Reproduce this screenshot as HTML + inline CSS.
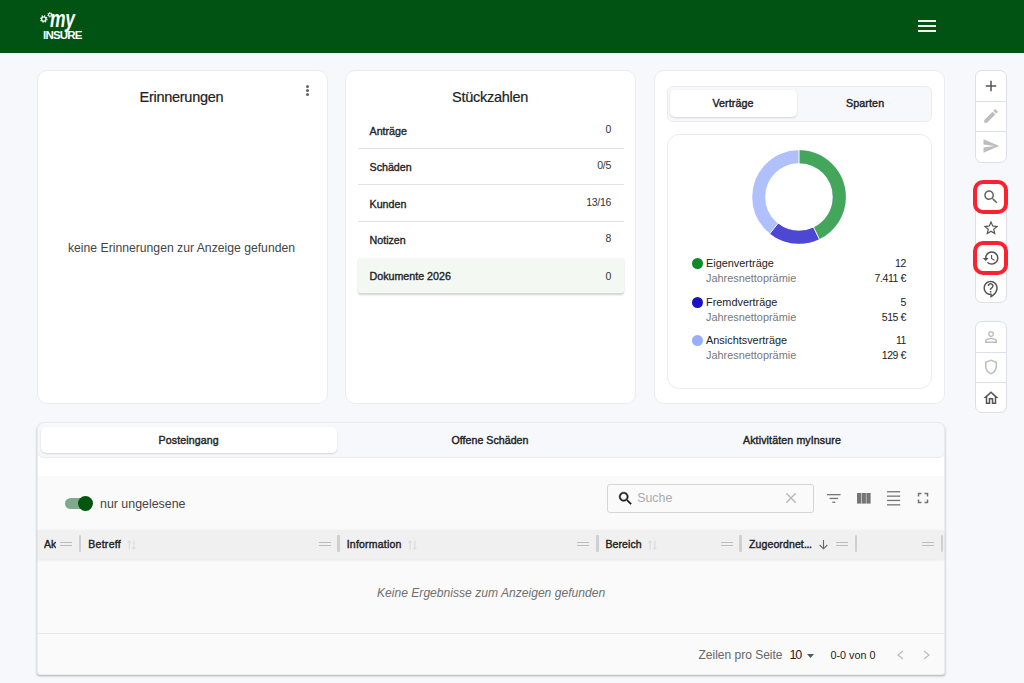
<!DOCTYPE html>
<html lang="de">
<head>
<meta charset="utf-8">
<title>myInsure</title>
<style>
*{box-sizing:border-box;margin:0;padding:0}
html,body{width:1024px;height:683px;overflow:hidden}
body{background:#f7f8fc;font-family:"Liberation Sans",sans-serif;color:#222;position:relative}
.abs{position:absolute}
.hdr{position:absolute;left:0;top:0;width:1024px;height:52.6px;background:#005312;box-shadow:0 1.4px 0 rgba(255,255,255,.85)}
.card{position:absolute;background:#fff;border:1px solid #ececee;border-radius:10px}
.t{position:absolute;white-space:nowrap;line-height:1}
.row{position:absolute;left:358px;width:266px;height:36px;border-bottom:1px solid #e2e2e2}
.lbl{font-size:10.7px;color:#222;-webkit-text-stroke:0.35px #222;letter-spacing:0}
.val{font-size:10.5px;color:#333;text-align:right;letter-spacing:-0.3px}
.lg{font-size:10.9px;color:#222}
.lg2{font-size:10.9px;color:#777}
.lv{font-size:10.5px;color:#222;letter-spacing:-0.4px}
.sb{position:absolute;left:975px;width:32px;background:#fff;border:1px solid #dcdfe9;border-radius:7px}
.sb i{position:absolute;left:0;width:30px;height:1px;background:#dcdfe9}
.red{position:absolute;left:973px;width:35px;height:34px;border:4.5px solid #f9222e;border-radius:10px}
svg{position:absolute;overflow:visible}
.ic{width:18px;height:18px}
.hd{font-size:10.5px;color:#222;-webkit-text-stroke:0.4px #222;letter-spacing:0.12px;top:539px}
.sep{position:absolute;top:535px;width:2.5px;height:17px;background:#d0d0d0;border-radius:1px}
.hdl{position:absolute;top:542px;width:12px;height:4px;border-top:1px solid #bdbdbd;border-bottom:1px solid #bdbdbd}
.srt{top:539.5px;width:9px;height:10px;fill:none;stroke:#d6d6d6;stroke-width:0.9}
.tab{font-size:10.6px;color:#222;-webkit-text-stroke:0.4px #222}
</style>
</head>
<body>
<div class="hdr">
  <div class="t" style="left:43px;top:30px;font-size:11.5px;font-weight:bold;color:#fff;letter-spacing:-0.8px">INSURE</div>
  <div class="t" id="t_my" style="left:50px;top:6px;font-size:23px;font-style:italic;font-weight:bold;color:#fff;transform-origin:0 0;transform:scale(0.76,1.08);letter-spacing:-0.5px">my</div>
  <svg style="left:40px;top:11px" width="14" height="12" viewBox="0 0 14 12"><circle cx="3.8" cy="8" r="2.2" fill="none" stroke="#fff" stroke-width="1.3"/><circle cx="3.8" cy="8" r="3.2" fill="none" stroke="#fff" stroke-width="1.2" stroke-dasharray="1.2 1.3"/><circle cx="10" cy="3.8" r="1.5" fill="none" stroke="#fff" stroke-width="1.1"/><circle cx="10" cy="3.8" r="2.3" fill="none" stroke="#fff" stroke-width="0.9" stroke-dasharray="0.9 0.9"/></svg>
  <div class="abs" style="left:918px;top:20px;width:18px;height:2px;background:#f0f0f0"></div>
  <div class="abs" style="left:918px;top:25px;width:18px;height:2px;background:#f0f0f0"></div>
  <div class="abs" style="left:918px;top:30px;width:18px;height:2px;background:#f0f0f0"></div>
</div>

<!-- card 1 -->
<div class="card" style="left:37px;top:70px;width:291px;height:334px"></div>
<div class="t" id="t_erin" style="left:139.5px;top:90px;font-size:14.5px;color:#222;letter-spacing:-0.27px;-webkit-text-stroke:0.2px #222">Erinnerungen</div>
<div class="abs" style="left:306px;top:85px;width:3px;height:3px;border-radius:50%;background:#666;box-shadow:0 4px 0 #666,0 8px 0 #666"></div>
<div class="t" id="t_keine" style="left:68px;top:241.8px;font-size:12.2px;color:#444">keine Erinnerungen zur Anzeige gefunden</div>

<!-- card 2 -->
<div class="card" style="left:345px;top:70px;width:291px;height:334px"></div>
<div class="t" id="t_stk" style="left:452px;top:90px;font-size:14.5px;color:#222;letter-spacing:-0.27px;-webkit-text-stroke:0.2px #222">Stückzahlen</div>
<div class="row" style="top:112px;height:37px"></div>
<div class="row" style="top:149px;height:36px"></div>
<div class="row" style="top:185px;height:37px"></div>
<div class="row" style="top:221px;border-bottom:none"></div>
<div class="row" style="top:257.6px;height:36.2px;background:#f3f8f3;border-bottom:1px solid #d8d8d8;border-radius:3px;box-shadow:0 1px 2px rgba(0,0,0,.18)"></div>
<div class="t lbl" style="left:369.5px;top:126px">Anträge</div>
<div class="t lbl" style="left:369.5px;top:162px">Schäden</div>
<div class="t lbl" style="left:369.5px;top:199px">Kunden</div>
<div class="t lbl" style="left:369.5px;top:235px">Notizen</div>
<div class="t lbl" style="left:369.5px;top:271px">Dokumente 2026</div>
<div class="t val" style="right:413px;top:124px">0</div>
<div class="t val" style="right:413px;top:160px">0/5</div>
<div class="t val" style="right:413px;top:197px">13/16</div>
<div class="t val" style="right:413px;top:233px">8</div>
<div class="t val" style="right:413px;top:271px">0</div>

<!-- card 3 -->
<div class="card" style="left:654px;top:70px;width:291px;height:334px"></div>
<div class="abs" style="left:667px;top:86px;width:265px;height:36px;background:#f7f8fb;border:1px solid #ececf0;border-radius:6px"></div>
<div class="abs" style="left:670px;top:90px;width:127px;height:27px;background:#fff;border-radius:5px;box-shadow:0 1px 2px rgba(0,0,0,.15)"></div>
<div class="t" id="t_vert" style="left:712.5px;top:98px;font-size:10.7px;-webkit-text-stroke:0.4px #222;color:#222;letter-spacing:0.07px">Verträge</div>
<div class="t" id="t_spar" style="left:846px;top:98px;font-size:10.7px;-webkit-text-stroke:0.4px #222;color:#222;letter-spacing:0.11px">Sparten</div>
<div class="abs" style="left:667px;top:134px;width:265px;height:255px;background:#fff;border:1px solid #ececee;border-radius:12px"></div>
<svg style="left:751px;top:149px" width="96" height="96" viewBox="-48 -48 96 96">
  <g fill="none" stroke-width="13" transform="rotate(-90)">
    <circle r="40.3" stroke="#b0c0fc" />
    <circle r="40.3" stroke="#43a65b" stroke-dasharray="108.5 400" />
    <circle r="40.3" stroke="#4e47d3" stroke-dasharray="45.2 400" stroke-dashoffset="-108.5"/>
  </g>
  <g stroke="#fff" stroke-width="1">
    <line x1="0" y1="-33" x2="0" y2="-47.5"/>
    <line x1="14.3" y1="29.7" x2="20.6" y2="42.8"/>
    <line x1="-20.6" y1="25.8" x2="-29.6" y2="37.1"/>
  </g>
</svg>
<!-- legend -->
<div class="abs" style="left:692px;top:258px;width:11px;height:11px;border-radius:50%;background:#0b8a27"></div>
<div class="abs" style="left:692px;top:297px;width:11px;height:11px;border-radius:50%;background:#1a12c4"></div>
<div class="abs" style="left:692px;top:335px;width:11px;height:11px;border-radius:50%;background:#98adfb"></div>
<div class="t lg" style="left:706px;top:258px">Eigenverträge</div>
<div class="t lg2" style="left:706px;top:273px">Jahresnettoprämie</div>
<div class="t lg" style="left:706px;top:297px">Fremdverträge</div>
<div class="t lg2" style="left:706px;top:312px">Jahresnettoprämie</div>
<div class="t lg" style="left:706px;top:335px">Ansichtsverträge</div>
<div class="t lg2" style="left:706px;top:350px">Jahresnettoprämie</div>
<div class="t lv" style="right:118px;top:258px">12</div>
<div class="t lv" style="right:118px;top:273px">7.411 €</div>
<div class="t lv" style="right:118px;top:297px">5</div>
<div class="t lv" style="right:118px;top:312px">515 €</div>
<div class="t lv" style="right:118px;top:335px">11</div>
<div class="t lv" style="right:118px;top:350px">129 €</div>

<!-- sidebar -->
<div class="sb" style="top:70px;height:93px"><i style="top:30px"></i><i style="top:60px"></i></div>
<div class="sb" style="top:182px;height:121px"></div>
<div class="sb" style="top:321px;height:92px"><i style="top:30px"></i><i style="top:60px"></i></div>
<div class="red" style="top:180px"></div>
<div class="red" style="top:241px"></div>
<svg class="ic" style="left:982px;top:76.7px" viewBox="0 0 24 24" fill="#555"><path d="M19 13h-6v6h-2v-6H5v-2h6V5h2v6h6v2z"/></svg>
<svg class="ic" style="left:982px;top:107px" viewBox="0 0 24 24" fill="#bdbdbd"><path d="M3 17.25V21h3.750L17.810 9.940l-3.750-3.750L3 17.250zM20.710 7.040c.390-.390.390-1.020 0-1.410l-2.340-2.340c-.390-.390-1.020-.390-1.410 0l-1.830 1.830 3.750 3.750 1.830-1.830z"/></svg>
<svg class="ic" style="left:982px;top:137.2px" viewBox="0 0 24 24" fill="#bdbdbd"><path d="M2.010 21L23 12 2.010 3 2 10l15 2-15 2z"/></svg>
<svg class="ic" style="left:982px;top:188px" viewBox="0 0 24 24" fill="#666"><path d="M15.500 14h-.790l-.280-.270C15.410 12.590 16 11.110 16 9.500 16 5.910 13.090 3 9.500 3S3 5.910 3 9.500 5.910 16 9.500 16c1.610 0 3.090-.590 4.230-1.570l.270.280v.790l5 4.990L20.490 19l-4.990-5zm-6 0C7.010 14 5 11.990 5 9.500S7.010 5 9.500 5 14 7.010 14 9.500 11.990 14 9.500 14z"/></svg>
<svg class="ic" style="left:982px;top:218.500px" viewBox="0 0 24 24" fill="#555"><path d="M22 9.240l-7.190-.620L12 2 9.190 8.630 2 9.240l5.460 4.730L5.820 21 12 17.270 18.180 21l-1.630-7.030L22 9.240zM12 15.400l-3.760 2.270 1-4.280-3.320-2.880 4.380-.380L12 6.100l1.710 4.040 4.380.380-3.320 2.880 1 4.280L12 15.400z"/></svg>
<svg class="ic" style="left:982px;top:249px" viewBox="0 0 24 24" fill="#555"><path d="M13 3c-4.970 0-9 4.030-9 9H1l3.890 3.890.070.140L9 12H6c0-3.870 3.130-7 7-7s7 3.130 7 7-3.130 7-7 7c-1.930 0-3.680-.790-4.940-2.060l-1.420 1.420C8.270 19.990 10.510 21 13 21c4.970 0 9-4.030 9-9s-4.030-9-9-9zm-1 5v5l4.280 2.540.720-1.210-3.500-2.080V8H12z"/></svg>
<svg class="ic" style="left:982px;top:279.500px" viewBox="0 0 24 24" fill="#555"><path d="M11 23.590v-3.600c-5.010-.260-9-4.420-9-9.490C2 5.260 6.260 1 11.500 1S21 5.260 21 10.500c0 4.950-3.440 9.930-8.570 12.400l-1.430.690zM11.500 3C7.360 3 4 6.360 4 10.500S7.360 18 11.500 18H13v2.300c3.640-2.300 6-6.080 6-9.800C19 6.360 15.640 3 11.500 3zm-1 11.500h2v2h-2zm2-1.500h-2c0-3.250 3-3 3-5 0-1.100-.900-2-2-2s-2 .900-2 2h-2c0-2.210 1.790-4 4-4s4 1.790 4 4c0 2.500-3 2.750-3 5z"/></svg>
<svg class="ic" style="left:982px;top:328px" viewBox="0 0 24 24" fill="#bdbdbd"><path d="M12 5.900c1.160 0 2.100.940 2.100 2.100s-.940 2.100-2.100 2.100S9.900 9.160 9.900 8s.940-2.100 2.100-2.100m0 9c2.970 0 6.100 1.460 6.100 2.100v1.100H5.900V17c0-.640 3.130-2.100 6.100-2.100M12 4C9.790 4 8 5.790 8 8s1.790 4 4 4 4-1.790 4-4-1.790-4-4-4zm0 9c-2.670 0-8 1.340-8 4v3h16v-3c0-2.660-5.330-4-8-4z"/></svg>
<svg class="ic" style="left:982px;top:358px" viewBox="0 0 24 24" fill="#bdbdbd"><path d="M12 2L4 5v6.090c0 5.050 3.410 9.760 8 10.910 4.590-1.150 8-5.860 8-10.910V5l-8-3zm6 9.090c0 4-2.550 7.700-6 8.830-3.450-1.130-6-4.820-6-8.830v-4.700l6-2.250 6 2.250v4.700z"/></svg>
<svg class="ic" style="left:982px;top:388.500px" viewBox="0 0 24 24" fill="#555"><path d="M12 5.690l5 4.500V18h-2v-6H9v6H7v-7.810l5-4.500M12 3L2 12h3v8h6v-6h2v6h6v-8h3L12 3z"/></svg>

<!-- bottom panel -->
<div class="abs" style="left:37px;top:422px;width:907.5px;height:253px;background:#fafafa;border:1px solid #ebebee;border-radius:7px 7px 3px 3px;box-shadow:0 1.5px 2.5px -0.5px rgba(0,0,0,.3)"></div>
<div class="abs" style="left:38px;top:450px;width:905.5px;height:26px;background:#fff"></div>
<div class="abs" style="left:37px;top:422px;width:907.5px;height:36px;background:#f7f8fb;border:1px solid #e9eaee;border-radius:7px"></div>
<div class="abs" style="left:41px;top:427px;width:296px;height:26px;background:#fff;border-radius:5px;box-shadow:0 1px 2px rgba(0,0,0,.15)"></div>
<div class="t tab" id="t_post" style="left:158.5px;top:435px;letter-spacing:0.13px">Posteingang</div>
<div class="t tab" id="t_off" style="left:451.5px;top:435px;letter-spacing:0.04px">Offene Schäden</div>
<div class="t tab" id="t_akt" style="left:743px;top:435px;letter-spacing:0.13px">Aktivitäten myInsure</div>

<div class="abs" style="left:65.2px;top:498.2px;width:26px;height:11px;border-radius:6px;background:#7fa98a"></div>
<div class="abs" style="left:78.2px;top:496.2px;width:15px;height:15px;border-radius:50%;background:#00560f"></div>
<div class="t" id="t_nur" style="left:100px;top:497.7px;font-size:12.4px;color:#444">nur ungelesene</div>

<div class="abs" style="left:606.5px;top:483.7px;width:207.5px;height:29.2px;border:1px solid #d6d6d6;border-radius:3px;background:#fafafa"></div>
<svg style="left:616.800px;top:490px;width:17px;height:17px" viewBox="0 0 24 24" fill="#222" stroke="#222" stroke-width="0.7"><path d="M15.500 14h-.790l-.280-.270C15.410 12.590 16 11.110 16 9.500 16 5.910 13.090 3 9.500 3S3 5.910 3 9.500 5.910 16 9.500 16c1.610 0 3.090-.590 4.230-1.570l.270.280v.790l5 4.990L20.490 19l-4.990-5zm-6 0C7.010 14 5 11.990 5 9.500S7.010 5 9.500 5 14 7.010 14 9.500 11.990 14 9.500 14z"/></svg>
<div class="t" id="t_suche" style="left:637.200px;top:492px;font-size:12.4px;color:#aaa">Suche</div>
<svg style="left:785.500px;top:493px;width:10px;height:10px" viewBox="0 0 10 10" stroke="#b5b5b5" stroke-width="1.250" fill="none"><path d="M0.300 0.300L9.700 9.700M9.700 0.300L0.300 9.700"/></svg>
<svg style="left:827.4px;top:494px;width:13.6px;height:9px" viewBox="0 0 13.6 9" fill="#757575"><rect x="0" y="0" width="13.6" height="1.3"/><rect x="2.6" y="3.8" width="8.4" height="1.3"/><rect x="5.3" y="7.6" width="3" height="1.3"/></svg>
<svg style="left:857px;top:493px;width:13.6px;height:10.6px" viewBox="0 0 13.6 10.6" fill="#757575"><rect x="0" y="0" width="4.2" height="10.6"/><rect x="4.7" y="0" width="4.2" height="10.6"/><rect x="9.4" y="0" width="4.2" height="10.6"/></svg>
<svg style="left:887px;top:491px;width:13.2px;height:14.5px" viewBox="0 0 13.2 14.5" fill="#757575"><rect y="0.1" width="13.2" height="1.3"/><rect y="4.5" width="13.2" height="1.3"/><rect y="8.8" width="13.2" height="1.3"/><rect y="13.2" width="13.2" height="1.3"/></svg>
<svg class="ic" style="left:914.2px;top:489.300px;width:18px;height:18px" viewBox="0 0 24 24" fill="#757575"><path d="M7 14H5v5h5v-2H7v-3zm-2-4h2V7h3V5H5v5zm12 7h-3v2h5v-5h-2v3zM14 5v2h3v3h2V5h-5z"/></svg>

<div class="abs" style="left:38px;top:530px;width:905.5px;height:29px;background:#f0f0f0;box-shadow:0 1px 3px rgba(0,0,0,.08)"></div>
<div class="t hd" style="left:44px;width:12px;overflow:hidden">Akt</div>
<div class="t hd" style="left:88.3px;letter-spacing:0.27px">Betreff</div>
<div class="t hd" style="left:346.700px;letter-spacing:0.22px">Information</div>
<div class="t hd" style="left:605.500px;letter-spacing:0.08px">Bereich</div>
<div class="t hd" style="left:749px">Zugeordnet<span style="letter-spacing:-0.4px">...</span></div>

<svg class="srt" style="left:126.5px" viewBox="0 0 9 10"><path d="M2.2 9.5V0.8M0.4 2.6L2.2 0.8L4 2.6M6.9 0.5V9.2M5.100 7.400L6.900 9.200L8.700 7.400"/></svg>
<svg class="srt" style="left:407.5px" viewBox="0 0 9 10"><path d="M2.2 9.5V0.8M0.4 2.6L2.2 0.8L4 2.6M6.9 0.5V9.2M5.100 7.400L6.900 9.200L8.700 7.400"/></svg>
<svg class="srt" style="left:647.5px" viewBox="0 0 9 10"><path d="M2.2 9.5V0.8M0.4 2.6L2.2 0.8L4 2.6M6.9 0.5V9.2M5.100 7.400L6.900 9.200L8.700 7.400"/></svg>
<svg style="left:818.5px;top:540px;width:9px;height:9.5px" viewBox="0 0 9 9.5" fill="none" stroke="#666" stroke-width="1.1"><path d="M4.5 0V8.6M0.7 5L4.5 8.8L8.3 5"/></svg>
<div class="hdl" style="left:60px"></div><div class="sep" style="left:78.500px"></div>
<div class="hdl" style="left:318.500px"></div><div class="sep" style="left:337px"></div>
<div class="hdl" style="left:577px"></div><div class="sep" style="left:596px"></div>
<div class="hdl" style="left:720.500px"></div><div class="sep" style="left:739px"></div>
<div class="hdl" style="left:836px"></div><div class="sep" style="left:854.500px"></div>
<div class="hdl" style="left:921.500px"></div><div class="sep" style="left:940.500px"></div>

<div class="t" id="t_kein" style="left:377px;top:587px;font-size:12.100px;font-style:italic;color:#707070">Keine Ergebnisse zum Anzeigen gefunden</div>
<div class="abs" style="left:38px;top:633px;width:906px;height:1px;background:#e9e9e9"></div>
<div class="t" id="t_zeil" style="left:698.500px;top:649px;font-size:12px;color:#666">Zeilen pro Seite</div>
<div class="t" style="left:789.500px;top:648.5px;font-size:12.5px;color:#222;letter-spacing:-1.2px">10</div>
<svg style="left:806.500px;top:653.500px;width:7px;height:4px" viewBox="0 0 7 4" fill="#555"><path d="M0 0h7L3.500 4z"/></svg>
<div class="t" style="left:830.500px;top:650px;font-size:10.800px;color:#222">0-0 von 0</div>
<svg style="left:897px;top:651px;width:7px;height:8px" viewBox="0 0 7 8" stroke="#bbb" stroke-width="1.200" fill="none"><path d="M6 0L1 4L6 8"/></svg>
<svg style="left:922.500px;top:651px;width:7px;height:8px" viewBox="0 0 7 8" stroke="#bbb" stroke-width="1.200" fill="none"><path d="M1 0L6 4L1 8"/></svg>
</body>
</html>
